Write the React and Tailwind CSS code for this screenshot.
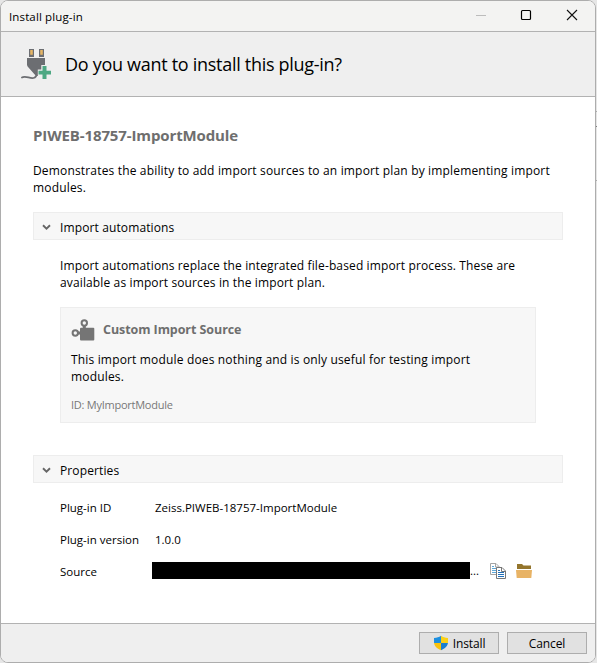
import React from "react";

function PlugIcon() {
  return (
    <svg width="32" height="32" viewBox="0 0 32 32" className="block shrink-0">
      <path d="M8 1h5v8H8zM18 1h5v8h-5z" fill="#6c6e72" />
      <path d="M9.200 2h2.600v4.800H9.200zM19.200 2h2.600v4.800h-2.600z" fill="#e5b565" />
      <path d="M6 10h18v8.500L17 26v2h-2L6.600 18.500 6 17z" fill="#6c6e72" />
      <path d="M.3 29.800C4.500 26.800 8.500 31 12.500 30c2.600-.7 3.200-2 3.200-4" fill="none" stroke="#6c6e72" strokeWidth="1.700" />
      <path d="M16.800 21.500h3.500V17h6.400v4.500H32v6.200h-5.300V32h-6.400v-4.300h-3.500z" fill="#efefef" />
      <path d="M21.500 18h4v4.700H30v3.800h-4.500V31h-4v-4.500H17.500v-3.800h4z" fill="#4ea883" />
    </svg>
  );
}

function ModuleIcon() {
  return (
    <svg width="24" height="24" viewBox="0 0 24 24" className="block shrink-0">
      <rect x="9" y="9.800" width="14.300" height="12.600" rx="1" fill="#757575" />
      <path d="M13.300 7v4M6 15h4" stroke="#757575" strokeWidth="3" />
      <circle cx="13.300" cy="5" r="2.700" fill="#f7f7f7" stroke="#757575" strokeWidth="2" />
      <circle cx="4.300" cy="15" r="2.700" fill="#f7f7f7" stroke="#757575" strokeWidth="2" />
    </svg>
  );
}

function CopyIcon() {
  return (
    <svg width="16" height="16" viewBox="0 0 16 16" className="block shrink-0">
      <path d="M.5.500h5.500l3 3v8h-8.500z" fill="#fff" stroke="#a5a5a5" />
      <path d="M5.500.500v3.500h3.500" fill="none" stroke="#a5a5a5" />
      <path d="M2 3.500h2M2 5.500h4M2 7.500h4M2 9.500h4" stroke="#5fa8d8" />
      <path d="M6.500 4.500h5.500l3.500 3.500v7.500h-9z" fill="#fff" stroke="#777" />
      <path d="M11.500 4.500V8.500h4" fill="none" stroke="#777" />
      <path d="M8 7.500h2M8 9.500h6M8 11.500h6M8 13.500h6" stroke="#2470b8" />
    </svg>
  );
}

function FolderIcon() {
  return (
    <svg width="16" height="14" viewBox="0 0 16 14" className="block shrink-0">
      <path d="M1 0h5l1.500 1.500H15V5H1z" fill="#94752c" />
      <path d="M0 6h16l-.7 8H.7z" fill="#e8b365" />
    </svg>
  );
}

function ShieldIcon() {
  return (
    <svg width="16" height="16" viewBox="0 0 16 16" className="block shrink-0">
      <clipPath id="shield">
        <path d="M8 .8C10 2.200 12 2.800 15 2.900V7c0 4-3 6.500-7 8.200C4 13.500 1 11 1 7V2.900C4 2.800 6 2.200 8 .8z" />
      </clipPath>
      <g clipPath="url(#shield)">
        <path d="M0 0h8v8H0z" fill="#1c8fe0" />
        <path d="M8 0h8v8H8z" fill="#fbd116" />
        <path d="M0 8h8v8H0z" fill="#f9c20e" />
        <path d="M8 8h8v8H8z" fill="#1a7fd0" />
      </g>
    </svg>
  );
}

function SectionBar({ children }) {
  return (
    <div className="flex h-[28px] w-[530px] items-center border border-[#ededed] bg-[#f7f7f7] pt-[2px] pl-[8px] tracking-[0.12px]">
      <svg width="9" height="7" viewBox="0 0 9 7" className="mr-[9px] block">
        <path d="M1 1.300l3.500 3.400L8 1.300" fill="none" stroke="#666" strokeWidth="1.900" />
      </svg>
      {children}
    </div>
  );
}

export default function App() {
  return (
    <div className="flex h-[663px] w-[597px] overflow-hidden bg-[#e6e6e6] font-['Open_Sans',sans-serif] text-[12px] leading-[17px] whitespace-nowrap text-black">
      <div className="flex h-[663px] w-[596px] shrink-0 flex-col overflow-hidden rounded-[8px] border border-[#adadad] bg-white">
        <div className="flex h-[31px] shrink-0 items-center border-b border-[#b2b2b2] bg-[#f3f3f2] pr-px pl-[8px]">
          <span className="flex-1 text-[11.5px] tracking-[0.13px]">Install plug-in</span>
          <svg width="120" height="30" viewBox="0 0 120 30" className="block" fill="none">
            <path d="M2 14.500h10" stroke="#bcbcbc" />
            <rect x="47.500" y="9.500" width="9" height="9" rx="1" stroke="#000" strokeWidth="1.200" />
            <path d="M93 9l10 10M103 9l-10 10" stroke="#111" strokeWidth="1.100" />
          </svg>
        </div>
        <header className="flex h-[65px] shrink-0 items-center border-b border-[#b2b2b2] bg-[#efefef] pl-[20px]">
          <PlugIcon />
          <h1 className="ml-[12px] text-[18px] leading-[24px] tracking-[-0.29px]">Do you want to install this plug-in?</h1>
        </header>
        <main className="flex-1 pt-[28px] pl-[32px]">
          <h2 className="text-[15px] leading-[20px] font-bold tracking-[-0.12px] text-[#6e6e6e]">PIWEB-18757-ImportModule</h2>
          <p className="mt-[17px] mb-[16px] tracking-[0.165px]">Demonstrates the ability to add import sources to an import plan by implementing import<br />modules.</p>
          <SectionBar><span>Import automations</span></SectionBar>
          <p className="mt-[17px] ml-[27px] tracking-[0.13px]">Import automations replace the integrated file-based import process. These are<br />available as import sources in the import plan.</p>
          <section className="mt-[16px] mb-[32px] ml-[27px] h-[116px] w-[476px] border border-[#ededed] bg-[#f7f7f7] pt-[10px] pl-[10px]">
            <div className="flex items-center gap-[8px]">
              <ModuleIcon />
              <h3 className="pb-[2px] text-[12.5px] font-bold tracking-[-0.07px] text-[#6e6e6e]">Custom Import Source</h3>
            </div>
            <p className="mt-[9px] tracking-[0.165px]">This import module does nothing and is only useful for testing import<br />modules.</p>
            <p className="mt-[11px] text-[11px] tracking-[-0.25px] text-[#777]">ID: MyImportModule</p>
          </section>
          <SectionBar><span>Properties</span></SectionBar>
          <dl className="mt-[8px] ml-[27px] grid auto-rows-[32px] grid-cols-[95px_1fr] items-center text-[11.5px]">
            <dt>Plug-in ID</dt>
            <dd>Zeiss.PIWEB-18757-ImportModule</dd>
            <dt>Plug-in version</dt>
            <dd>1.0.0</dd>
            <dt>Source</dt>
            <dd className="-ml-[3px] flex h-[32px] items-start pt-[7px]">
              <span className="h-[17px] w-[318px] bg-black" />
              <span className="w-[20px]">...</span>
              <span className="pt-px"><CopyIcon /></span>
              <span className="ml-[10px] pt-[2px]"><FolderIcon /></span>
            </dd>
          </dl>
        </main>
        <footer className="flex h-[39px] shrink-0 items-center justify-end gap-[8px] border-t border-[#b2b2b2] bg-[#efefef] pr-[8px]">
          <button className="flex h-[22px] w-[80px] items-center justify-center gap-[4px] border border-[#adadad] bg-[#e1e1e1] tracking-[-0.1px]">
            <ShieldIcon />
            <span>Install</span>
          </button>
          <button className="h-[22px] w-[80px] border border-[#adadad] bg-[#e1e1e1] tracking-[-0.1px]">Cancel</button>
        </footer>
      </div>
      <div className="w-px">
        <div className="mt-[111px] h-px bg-[#adadad]" />
        <div className="mt-[14px] h-px bg-[#808080]" />
        <div className="mt-[53px] h-px bg-[#adadad]" />
      </div>
    </div>
  );
}
